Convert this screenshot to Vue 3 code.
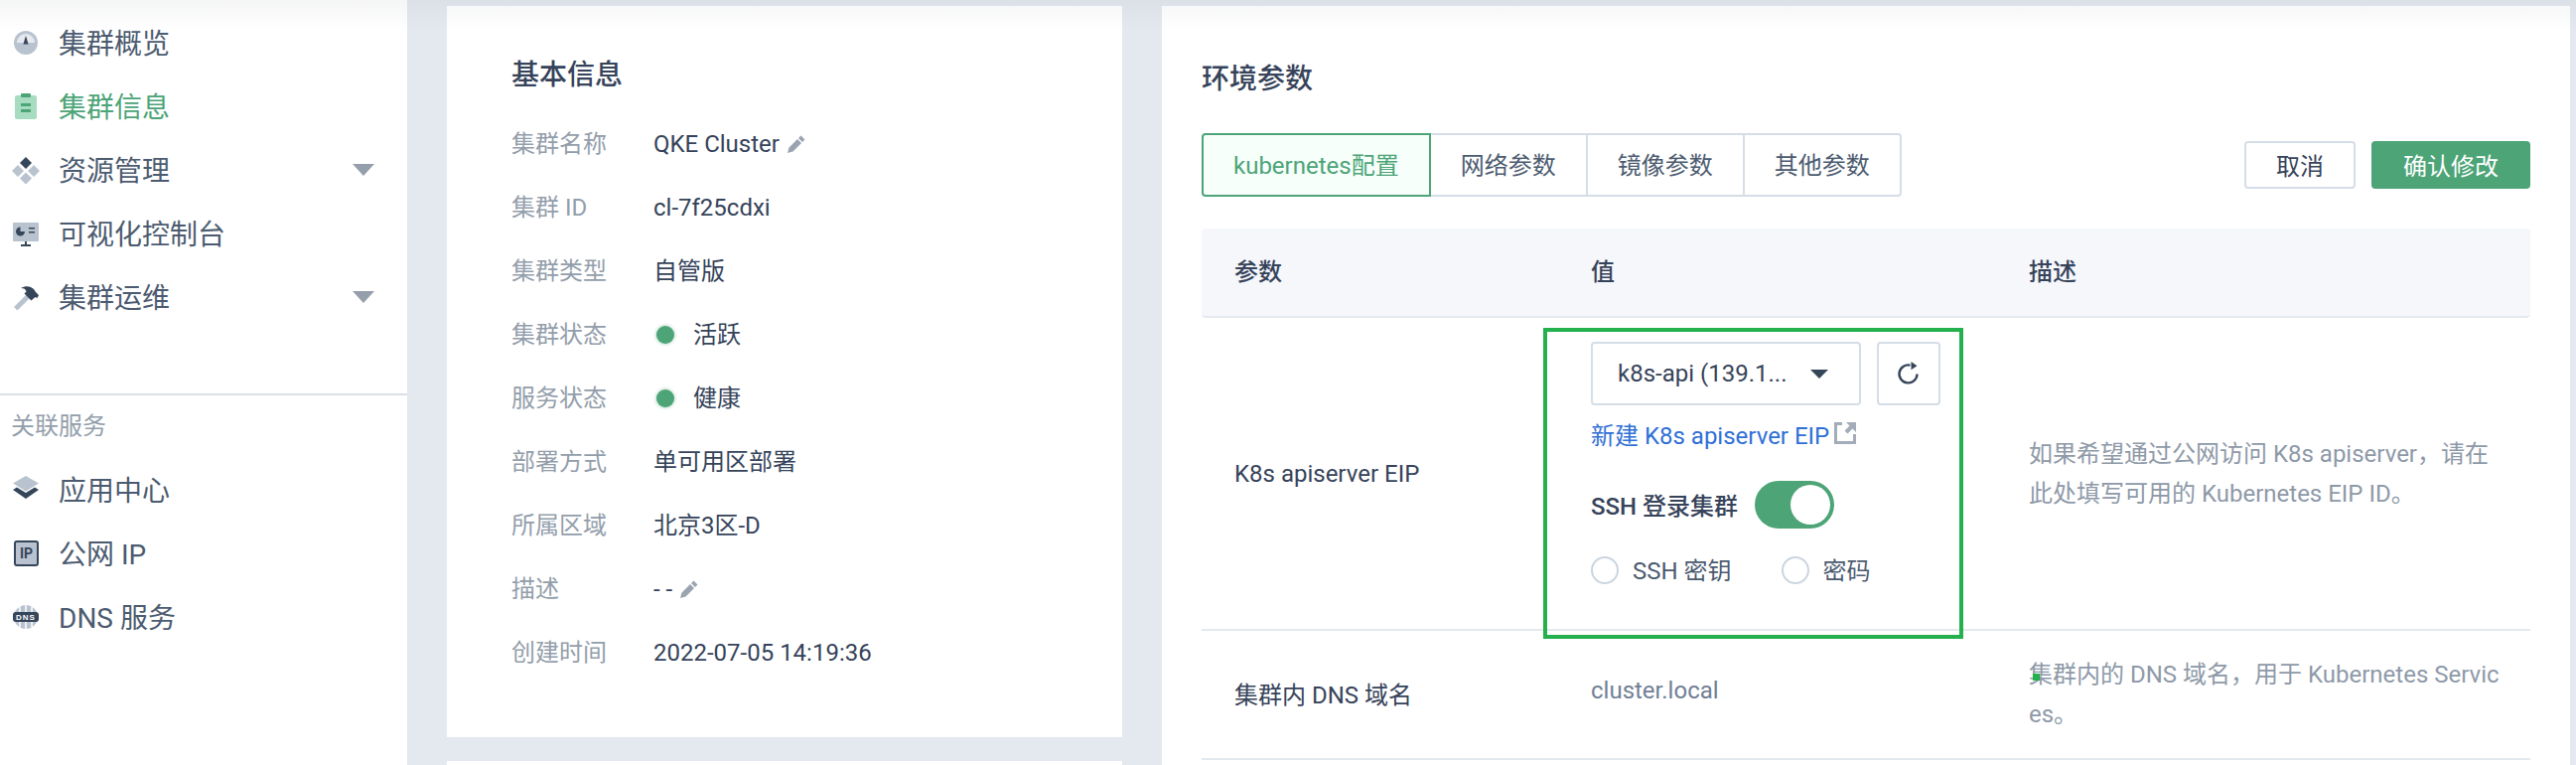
<script setup>
const menu = [
  { key: 'gauge', label: '集群概览' },
  { key: 'clip', label: '集群信息', active: true },
  { key: 'cubes', label: '资源管理', caret: true },
  { key: 'screen', label: '可视化控制台' },
  { key: 'hammer', label: '集群运维', caret: true },
]
const services = [
  { key: 'layers', label: '应用中心' },
  { key: 'ip', label: '公网 IP' },
  { key: 'dns', label: 'DNS 服务' },
]
const info = [
  { k: '集群名称', v: 'QKE Cluster', edit: true },
  { k: '集群 ID', v: 'cl-7f25cdxi' },
  { k: '集群类型', v: '自管版' },
  { k: '集群状态', v: '活跃', dot: true },
  { k: '服务状态', v: '健康', dot: true },
  { k: '部署方式', v: '单可用区部署' },
  { k: '所属区域', v: '北京3区-D' },
  { k: '描述', v: '- -', edit: true },
  { k: '创建时间', v: '2022-07-05 14:19:36' },
]
const tabs = ['kubernetes配置', '网络参数', '镜像参数', '其他参数']
</script>

<template>
  <div class="page">
    <aside class="side">
      <nav class="side-top">
        <a v-for="m in menu" :key="m.key" class="item" :class="{ on: m.active }">
          <svg class="ico" width="28" height="28" viewBox="0 0 28 28">
            <g v-if="m.key === 'gauge'">
              <circle cx="14" cy="14" r="12" fill="#b9c3cf" />
              <path d="M5 14a9 9 0 0 1 18 0z" fill="#e6eaef" />
              <path d="M14 7l2.600 8.500h-5.200z" fill="#36465a" />
            </g>
            <g v-else-if="m.key === 'clip'">
              <rect x="3" y="3" width="22" height="24" rx="2" fill="#a8dcc1" />
              <rect x="9" y="1" width="10" height="4" rx="1" fill="#4ca477" />
              <rect x="9" y="11" width="10" height="3" fill="#4ca477" />
              <rect x="9" y="17" width="10" height="3" fill="#4ca477" />
            </g>
            <g v-else-if="m.key === 'cubes'">
              <path d="M14 1l6 6-6 6-6-6z" fill="#36465a" />
              <path d="M6 9l6 6-6 6-6-6zM22 9l6 6-6 6-6-6zM14 16.500l6 6-6 6-6-6z" fill="#b9c3cf" />
            </g>
            <g v-else-if="m.key === 'screen'">
              <rect x="1" y="3" width="26" height="19" rx="1" fill="#b9c3cf" />
              <path d="M13 12a4.500 4.500 0 1 1-4.500-4.500v4.500z" fill="#36465a" />
              <path d="M17 8h6v1.500h-6zM17 12h6v1.500h-6z" fill="#36465a" />
              <path d="M13 22h2v3h4v2H9v-2h4z" fill="#36465a" />
            </g>
            <g v-else-if="m.key === 'hammer'">
              <path d="M2 24L16 10l3.500 3.500L5.500 27.500z" fill="#b9c3cf" />
              <path d="M9 5c5-3 10-2 13 1l2 3 3 3-1.500 3-2-1-4 3.500-7-7 2-2C14 6 12 5 9 5z" fill="#36465a" />
            </g>
          </svg>
          <span class="item-t">{{ m.label }}</span>
          <i v-if="m.caret" class="caret"></i>
        </a>
      </nav>
      <div class="side-rule"></div>
      <p class="side-lab">关联服务</p>
      <a v-for="s in services" :key="s.key" class="item">
        <svg class="ico" width="28" height="28" viewBox="0 0 28 28">
          <g v-if="s.key === 'layers'">
            <path d="M14 0l13 7.500-13 8-13-8z" fill="#b9c3cf" />
            <path d="M5 11.500l9 5.500 9-5.500 4 2.500-13 9-13-9z" fill="#36465a" />
          </g>
          <g v-else-if="s.key === 'ip'">
            <rect x="3" y="2" width="23" height="24" rx="2" fill="#b9c3cf" stroke="#36465a" stroke-width="2" />
            <text x="14.500" y="19" text-anchor="middle" class="ip-t">IP</text>
          </g>
          <g v-else>
            <circle cx="14" cy="14" r="12" fill="#b9c3cf" />
            <path d="M14 2v24M8 3.500v21M20 3.500v21" stroke="#fff" stroke-width="1.500" fill="none" />
            <rect x="1" y="9" width="26" height="10" rx="3" fill="#36465a" />
            <text x="14" y="17" text-anchor="middle" class="dns-t">DNS</text>
          </g>
        </svg>
        <span class="item-t">{{ s.label }}</span>
      </a>
    </aside>

    <main class="main">
      <div class="col-left">
        <section class="card info">
          <h3 class="title info-title">基本信息</h3>
          <div v-for="r in info" :key="r.k" class="info-row">
            <span class="info-k">{{ r.k }}</span>
            <span v-if="r.dot" class="dot"></span>
            <span class="info-v">{{ r.v }}</span>
            <svg v-if="r.edit" class="pen" width="18" height="18" viewBox="0 0 18 18">
              <path d="M0 18l1.500-5.500L10 4l4 4-8.500 8.500zM11 3l2.500-2.500 4 4L15 7z" fill="#9aa4b1" />
            </svg>
          </div>
        </section>
        <section class="card next"></section>
      </div>

      <section class="card env">
        <h3 class="title env-title">环境参数</h3>
        <div class="bar">
          <div class="tabs">
            <button v-for="(t, i) in tabs" :key="t" type="button" class="tab" :class="{ on: i === 0 }">{{ t }}</button>
          </div>
          <div class="btns">
            <button type="button" class="btn">取消</button>
            <button type="button" class="btn btn--ok">确认修改</button>
          </div>
        </div>

        <div class="tr th">
          <div>参数</div>
          <div>值</div>
          <div>描述</div>
        </div>

        <div class="tr r1">
          <div>K8s apiserver EIP</div>
          <div class="val">
            <div class="pick">
              <div class="select">
                <span>k8s-api (139.1...</span>
                <i class="select-caret"></i>
              </div>
              <button type="button" class="refresh">
                <svg width="24" height="24" viewBox="0 0 24 24">
                  <path d="M20.500 12.500A9 9 0 1 1 13.500 3.600" fill="none" stroke="#36465a" stroke-width="2.400" />
                  <path d="M14.500 0l6 4.200-6 4z" fill="#36465a" />
                </svg>
              </button>
            </div>
            <a class="link">新建 K8s apiserver EIP<svg class="ext" width="22" height="22" viewBox="0 0 22 22">
                <path d="M0 0h8v3H3v16h16v-7h3v10H0z" fill="#a3acb8" />
                <path d="M12 0h10v10l-3.500-3.500-5 5-3-3 5-5z" fill="#a3acb8" />
              </svg></a>
            <div class="ssh">
              <b class="ssh-t">SSH 登录集群</b>
              <span class="toggle"><i></i></span>
            </div>
            <div class="radios">
              <label class="radio"><i></i><span>SSH 密钥</span></label>
              <label class="radio"><i></i><span>密码</span></label>
            </div>
          </div>
          <div class="desc">如果希望通过公网访问 K8s apiserver，请在此处填写可用的 Kubernetes EIP ID。</div>
        </div>

        <div class="tr r2">
          <div class="up">集群内 DNS 域名</div>
          <div class="muted up">cluster.local</div>
          <div class="desc">集群内的 DNS 域名，用于 Kubernetes Services。</div>
        </div>
      </section>
    </main>

    <!-- annotation drawn on top of the screenshot -->
    <div class="mark"></div>
    <div class="speck"></div>
    <div class="top-shade"></div>
  </div>
</template>

<style>
html,
body {
  margin: 0;
  background: #e4e9ef;
}
</style>

<style scoped>
.page {
  position: relative;
  display: flex;
  width: 2594px;
  height: 770px;
  overflow: hidden;
  background: #e4e9ef;
  font-family: Roboto, 'Noto Sans CJK SC', sans-serif;
  font-size: 24px;
  color: #36435a;
}

.top-shade {
  position: absolute;
  left: 0;
  right: 0;
  top: 0;
  height: 32px;
  background: linear-gradient(rgba(60, 70, 90, 0.05), rgba(60, 70, 90, 0));
  pointer-events: none;
}

.side {
  flex: none;
  width: 410px;
  background: #fff;
}

.side-top {
  padding-top: 11px;
}

.item {
  display: flex;
  align-items: center;
  height: 64px;
  padding: 0 33px 0 12px;
  font-size: 28px;
  color: #4c5b70;
}

.item-t {
  margin-bottom: 3px;
}

.item.on {
  color: #4ca477;
}

.ico {
  flex: none;
  margin-right: 19px;
}

.ip-t {
  font: 700 14px Roboto, sans-serif;
  fill: #36465a;
}

.dns-t {
  font: 700 8px 'Liberation Sans', sans-serif;
  letter-spacing: 1px;
  fill: #fff;
}

.caret {
  margin-left: auto;
  border-left: 11px solid transparent;
  border-right: 11px solid transparent;
  border-top: 12px solid #959eab;
}

.side-rule {
  height: 2px;
  margin-top: 65px;
  background: #d9e0e8;
}

.side-lab {
  margin: 0;
  height: 63px;
  padding-left: 11px;
  line-height: 63px;
  font-size: 24px;
  color: #939eab;
}

.main {
  flex: 1;
  display: flex;
  gap: 40px;
  padding: 6px 6px 0 40px;
  min-width: 0;
}

.col-left {
  flex: none;
  width: 680px;
}

.card {
  background: #fff;
}

.title {
  margin: 0;
  font-size: 28px;
  line-height: 40px;
  font-weight: 500;
  color: #36435a;
}

.info {
  height: 736px;
  padding: 50px 0 0 65px;
  box-sizing: border-box;
}

.info-title {
  margin-bottom: 17px;
}

.info-row {
  display: flex;
  align-items: center;
  height: 64px;
  line-height: 64px;
}

.info-k {
  flex: none;
  width: 143px;
  color: #939eab;
}

.dot {
  flex: none;
  width: 18px;
  height: 18px;
  margin: 0 19px 0 3px;
  border-radius: 50%;
  background: #4ca477;
  box-shadow: 0 0 3px 1px rgba(76, 164, 119, 0.35);
}

.pen {
  margin-left: 8px;
}

.next {
  height: 40px;
  margin-top: 24px;
}

.env {
  flex: 1;
  min-width: 0;
  padding: 54px 40px 0;
}

.env-title {
  margin-bottom: 34px;
}

.bar {
  display: flex;
  align-items: center;
  justify-content: space-between;
}

.tabs {
  display: flex;
  height: 64px;
}

.tab {
  height: 64px;
  margin-left: -2px;
  padding: 0 30px 4px;
  border: 2px solid #d5dde7;
  background: #fff;
  font: inherit;
  color: #4c5b70;
}

.tab:first-child {
  margin-left: 0;
  border-radius: 4px 0 0 4px;
}

.tab:last-child {
  border-radius: 0 4px 4px 0;
}

.tab.on {
  position: relative;
  border-color: #4ca477;
  background: #f7fffb;
  color: #4ca477;
}

.btns {
  display: flex;
  gap: 16px;
}

.btn {
  height: 48px;
  width: 112px;
  padding: 0 0 2px;
  border: 2px solid #d5dde7;
  border-radius: 4px;
  background: #fff;
  font: inherit;
  color: #36435a;
}

.btn--ok {
  width: 160px;
  border-color: #4ca477;
  background: #4ca477;
  color: #fff;
}

.tr {
  display: grid;
  grid-template-columns: 359px 441px 1fr;
  align-items: center;
  box-sizing: border-box;
  border-bottom: 2px solid #e4e9ef;
}

.tr > div {
  padding-left: 33px;
}

.th {
  height: 90px;
  margin-top: 32px;
  padding-bottom: 5px;
  border-radius: 4px;
  background: #f5f7fa;
  font-weight: 500;
}

.r1 {
  height: 315px;
}

.r2 {
  height: 130px;
}

.up {
  margin-bottom: 4px;
}

.muted.up {
  margin-bottom: 8px;
}

.val {
  align-self: start;
  padding-top: 24px;
}

.pick {
  display: flex;
  gap: 16px;
}

.select {
  display: flex;
  align-items: center;
  justify-content: space-between;
  box-sizing: border-box;
  width: 272px;
  height: 64px;
  padding: 0 31px 0 25px;
  border: 2px solid #d5dde7;
  border-radius: 4px;
}

.select-caret {
  border-left: 9px solid transparent;
  border-right: 9px solid transparent;
  border-top: 9px solid #36465a;
}

.refresh {
  display: flex;
  align-items: center;
  justify-content: center;
  width: 64px;
  height: 64px;
  padding: 0;
  border: 2px solid #d5dde7;
  border-radius: 4px;
  background: #fff;
}

.link {
  display: flex;
  align-items: center;
  height: 40px;
  margin-top: 8px;
  color: #2f6fd6;
  white-space: pre;
}

.ext {
  margin-left: 5px;
}

.ssh {
  display: flex;
  align-items: center;
  margin-top: 28px;
}

.ssh-t {
  font-weight: 500;
  margin-bottom: 2px;
}

.toggle {
  display: flex;
  align-items: center;
  justify-content: flex-end;
  box-sizing: border-box;
  width: 80px;
  height: 48px;
  margin-left: 17px;
  padding-right: 4px;
  border-radius: 24px;
  background: #4ca477;
}

.toggle i {
  width: 40px;
  height: 40px;
  border-radius: 50%;
  background: #fff;
}

.radios {
  display: flex;
  gap: 50px;
  margin-top: 28px;
}

.radio {
  display: flex;
  align-items: center;
  height: 28px;
  color: #4c5b70;
}

.radio span {
  margin-bottom: 4px;
}

.radio i {
  box-sizing: border-box;
  width: 28px;
  height: 28px;
  margin-right: 14px;
  border: 2px solid #cbd5e0;
  border-radius: 50%;
}

.desc {
  line-height: 40px;
  padding-right: 28px;
  color: #8e99a8;
  word-break: break-all;
}

.muted {
  color: #718096;
}

.mark {
  position: absolute;
  left: 1554px;
  top: 330px;
  width: 423px;
  height: 313px;
  box-sizing: border-box;
  border: 4px solid #23b04d;
  pointer-events: none;
}

.speck {
  position: absolute;
  left: 2047px;
  top: 678px;
  width: 7px;
  height: 7px;
  background: #23b04d;
}
</style>
